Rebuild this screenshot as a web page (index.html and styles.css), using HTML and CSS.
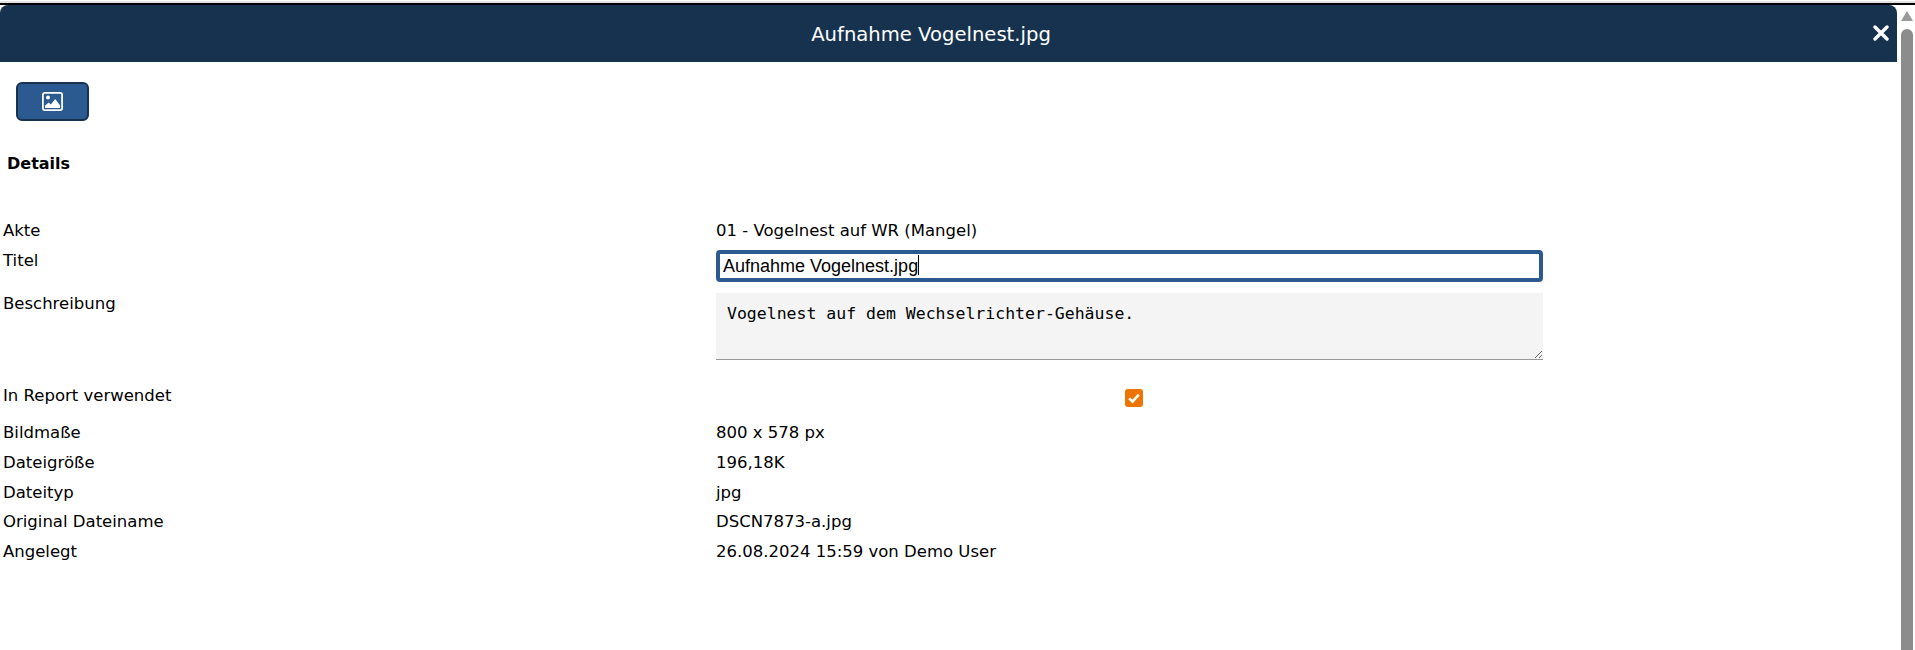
FILE: index.html
```html
<!DOCTYPE html>
<html lang="de">
<head>
<meta charset="utf-8">
<title>Aufnahme Vogelnest.jpg</title>
<link rel="stylesheet" href="styles.css">
</head>
<body>
<div class="topline"></div>
<div class="shell">
  <main class="dialog">
    <header class="titlebar">
      <h1 class="title">Aufnahme Vogelnest.jpg</h1>
      <button class="close" type="button" aria-label="Schließen">
        <svg viewBox="0 0 16 16" width="16" height="16"><path d="M2 2L14 14M14 2L2 14" stroke="#fff" stroke-width="3.4" stroke-linecap="round" fill="none"/></svg>
      </button>
    </header>
    <div class="toolbar">
      <button class="imgbtn" type="button" aria-label="Bild">
        <svg viewBox="0 0 21 19" width="21" height="19"><rect x="0.9" y="0.9" width="19.2" height="17.2" rx="1.8" fill="#2a5a8f" stroke="#fff" stroke-width="1.8"/><circle cx="6" cy="5.6" r="2" fill="#fff"/><path d="M3 16v-2.2l3.6-3.4 2.2 2 4.4-5.4 4.8 6.2V16z" fill="#fff"/></svg>
      </button>
    </div>
    <h2 class="section">Details</h2>
    <div class="form">
      <div class="cell">Akte</div><div class="cell">01 - Vogelnest auf WR (Mangel)</div>
      <div class="cell">Titel</div><div class="field title-field"><input class="input" type="text" value="Aufnahme Vogelnest.jpg"><span class="caret"></span></div>
      <div class="cell">Beschreibung</div><div class="field"><textarea class="textarea">Vogelnest auf dem Wechselrichter-Gehäuse.</textarea></div>
      <div class="cell report">In Report verwendet</div><div class="check-cell"><span class="check" role="checkbox" aria-checked="true"><svg viewBox="0 0 18 18" width="18" height="18"><path d="M4.2 9.4l3.3 3.3 6.3-7" fill="none" stroke="#fff" stroke-width="2.6"/></svg></span></div>
      <div class="cell">Bildmaße</div><div class="cell">800 x 578 px</div>
      <div class="cell">Dateigröße</div><div class="cell">196,18K</div>
      <div class="cell">Dateityp</div><div class="cell">jpg</div>
      <div class="cell">Original Dateiname</div><div class="cell">DSCN7873-a.jpg</div>
      <div class="cell">Angelegt</div><div class="cell">26.08.2024 15:59 von Demo User</div>
    </div>
  </main>
  <div class="scrollbar">
    <div class="arrow"></div>
    <div class="thumb"></div>
  </div>
</div>
</body>
</html>
```

FILE: styles.css
```css
* { box-sizing: border-box; }
html, body { height: 100%; margin: 0; overflow: hidden; }
body {
  background: #fff;
  color: #000;
  font-family: "DejaVu Sans", sans-serif;
  font-size: 16.5px;
  display: flex;
  flex-direction: column;
}
.topline {
  height: 5px;
  flex: none;
  background: #e2e2e2;
  border-top: 1px solid #fff;
  border-bottom: 2px solid #000;
}
.shell { flex: 1; display: flex; min-height: 0; }
.dialog { width: 1897px; flex: none; }
.titlebar {
  height: 57px;
  padding: 1px 35px 0 0;
  background: #17324f;
  border-radius: 8px 8px 0 0;
  display: flex;
  align-items: center;
  justify-content: center;
  position: relative;
}
.title { margin: 0; color: #fff; font-size: 19.6px; font-weight: 400; }
.close {
  position: absolute;
  right: 8px;
  top: 20px;
  width: 16px;
  height: 16px;
  padding: 0;
  border: 0;
  background: none;
  display: flex;
}
.toolbar { padding: 20px 0 0 16px; }
.imgbtn {
  width: 73px;
  height: 39px;
  padding: 0;
  background: #2a5a8f;
  border: 2px solid #17324f;
  border-radius: 6px;
  display: flex;
  align-items: center;
  justify-content: center;
}
.section { margin: 33px 0 0 7px; font-size: 16px; font-weight: 700; line-height: 20px; }
.form {
  margin-top: 41px;
  padding-left: 3px;
  display: grid;
  grid-template-columns: 713px 827px;
  grid-template-rows: 30px 43px 93px 36px;
  grid-auto-rows: 29.75px;
  line-height: 20px;
}
.cell { padding-top: 6px; }
.cell.report { padding-top: 5px; }
.field { padding-top: 5px; position: relative; }
.input {
  display: block;
  width: 100%;
  height: 32px;
  padding: 0 3px;
  border: 4px solid #2a5a8f;
  border-radius: 4px;
  background: #fff;
  font-family: "Liberation Sans", sans-serif;
  font-size: 18px;
  color: #000;
  outline: none;
}
.caret {
  position: absolute;
  left: 202px;
  top: 10px;
  width: 1px;
  height: 20px;
  background: #000;
}
.textarea {
  display: block;
  width: 100%;
  height: 67px;
  padding: 11px 11px;
  border: 0;
  border-bottom: 1px solid #999;
  border-radius: 0;
  background: #f4f4f4;
  font-family: "DejaVu Sans Mono", monospace;
  font-size: 16.5px;
  line-height: 20px;
  color: #000;
  outline: none;
  resize: vertical;
}
.check-cell { display: flex; justify-content: center; padding: 8px 0 0 8px; }
.check { width: 18px; height: 18px; display: flex; background: #ee7402; border-radius: 3px; }
.scrollbar {
  width: 12px;
  margin-left: 4px;
  display: flex;
  flex-direction: column;
}
.arrow {
  width: 0;
  height: 0;
  margin-top: 6px;
  border-left: 6px solid transparent;
  border-right: 6px solid transparent;
  border-bottom: 10px solid #9a9a9a;
}
.thumb { flex: 1; width: 100%; margin-top: 8px; background: #8c8c8c; border-radius: 6px 6px 0 0; }
```
